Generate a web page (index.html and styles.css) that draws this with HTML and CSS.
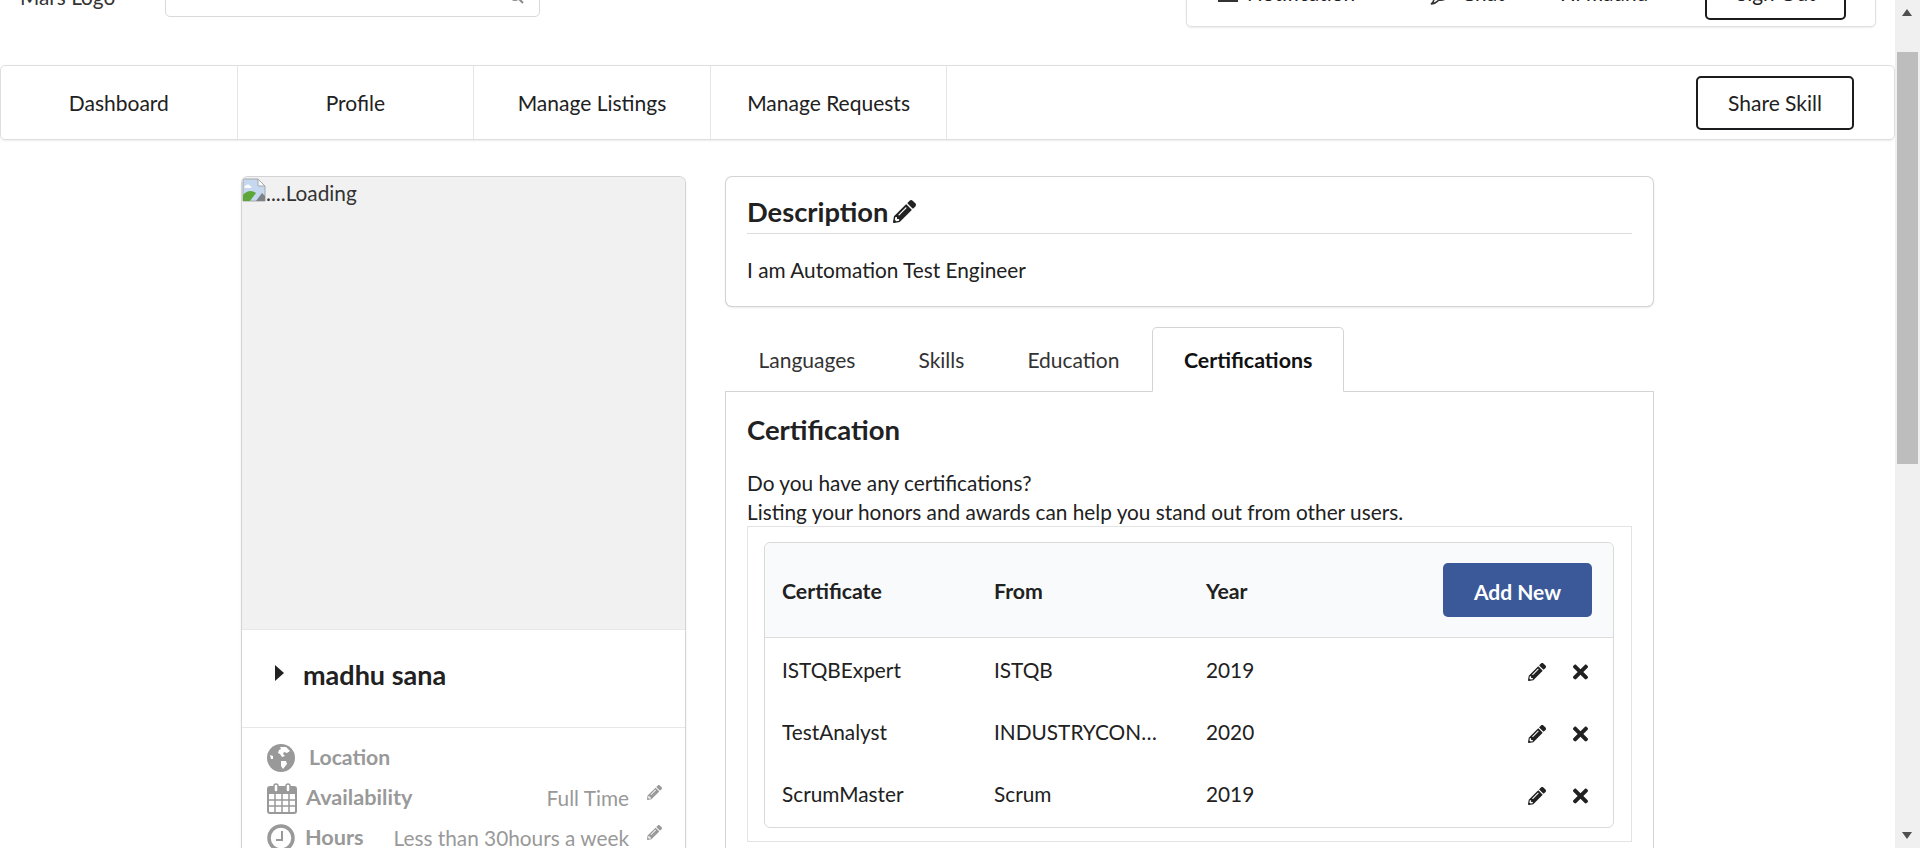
FILE: index.html
```html
<!DOCTYPE html>
<html lang="en">

<head>
	<meta charset="UTF-8" />
	<meta name="viewport" content="width=device-width, initial-scale=1.0" />
	<title>Profile</title>
	<link rel="stylesheet" href="styles.css">
</head>

<body>
	<svg class="defs" width="0" height="0">
		<symbol id="pencil" viewBox="0 0 512 512">
			<path d="M497.9 142.1l-46.1 46.1c-4.7 4.7-12.3 4.7-17 0l-111-111c-4.7-4.7-4.7-12.3 0-17l46.1-46.1c18.7-18.7 49.1-18.7 67.9 0l60.1 60.1c18.8 18.7 18.8 49.1 0 67.9zM284.2 99.8L21.6 362.4.4 483.9c-2.9 16.4 11.4 30.6 27.8 27.8l121.5-21.3 262.6-262.6c4.7-4.7 4.7-12.3 0-17l-111-111c-4.8-4.7-12.4-4.7-17.1 0zM124.1 339.9c-5.5-5.5-5.5-14.3 0-19.8l154-154c5.5-5.5 14.3-5.5 19.8 0s5.5 14.3 0 19.8l-154 154c-5.5 5.5-14.3 5.5-19.8 0zM88 424h48v36.3l-64.5 11.3-31.1-31.1L51.7 376H88v48z" />
		</symbol>
		<symbol id="cross" viewBox="0 0 352 512">
			<path d="M242.72 256l100.07-100.07c12.28-12.28 12.28-32.19 0-44.48l-22.24-22.24c-12.28-12.28-32.19-12.28-44.48 0L176 189.28 75.93 89.21c-12.28-12.28-32.19-12.28-44.48 0L9.21 111.45c-12.28 12.28-12.28 32.19 0 44.48L109.28 256 9.21 356.07c-12.28 12.28-12.28 32.19 0 44.48l22.24 22.24c12.28 12.28 32.2 12.28 44.48 0L176 322.72l100.07 100.07c12.28 12.28 32.2 12.28 44.48 0l22.24-22.24c12.28-12.28 12.28-32.19 0-44.48L242.72 256z" />
		</symbol>
	</svg>

	<div class="page">
		<div class="topbar">
			<div class="logo">Mars Logo</div>
			<div class="search">
				<svg class="search-icon" width="16" height="16" viewBox="0 0 16 16">
					<circle cx="7" cy="7" r="5" fill="none" stroke="#8a8a8a" stroke-width="2" />
					<path d="M11 11l4 4" stroke="#8a8a8a" stroke-width="2" />
				</svg>
			</div>
			<div class="usermenu">
				<svg class="icon-note" width="20" height="18" viewBox="0 0 20 18">
					<path d="M0 3h20M0 9h20M0 15h20" stroke="#333" stroke-width="2" />
				</svg>
				<span class="note-text">Notification</span>
				<svg class="icon-chat" width="20" height="20" viewBox="0 0 20 20">
					<path d="M5 13a9 7 0 1 1 5 2c-2 2-5 4-8 4 2-1 3-3 3-6z" fill="none" stroke="#333" stroke-width="1.6" />
				</svg>
				<span class="chat-text">Chat</span>
				<span class="hello">Hi madhu</span>
				<a class="btn-outline btn-signout" href="#">Sign Out</a>
			</div>
		</div>

		<nav class="mainnav">
			<a class="navitem" href="#">Dashboard</a>
			<a class="navitem" href="#">Profile</a>
			<a class="navitem" href="#">Manage Listings</a>
			<a class="navitem" href="#">Manage Requests</a>
			<a class="btn-outline btn-share" href="#">Share Skill</a>
		</nav>

		<div class="content">
			<aside class="profile">
				<div class="photo">
					<svg class="broken" width="24" height="24" viewBox="0 0 24 24">
						<path d="M1 1h15l7 7v15H1z" fill="#c6d8ef" stroke="#a3a8ad" />
						<path d="M16 1v7h7z" fill="#fafafa" stroke="#a3a8ad" />
						<path d="M3 8c2-2 4-2 5 0 2 0 2 2 0 2H4C2 10 2 8 3 8z" fill="#fff" />
						<path d="M1 23v-6c4-5 9-5 13-2l-6 8z" fill="#5da639" />
						<path d="M14 23l6-8 3 3v5z" fill="#7d8287" />
					</svg>
					<span class="photo-alt">....Loading</span>
				</div>
				<div class="person">
					<span class="caret"></span>
					<span class="person-name">madhu sana</span>
				</div>
				<ul class="facts">
					<li class="fact">
						<svg class="fact-icon" width="28" height="28" viewBox="0 0 28 28">
							<circle cx="14" cy="14" r="14" fill="#999" />
							<path d="M13 3l6 0 4 4-3 2-3-1-1 2 2 2-3 1-2-3-2-1 1-3 2-1z M14 17l5 0 1 3-4 5-2-3z M3 11l3 1 0 3-2 0z" fill="#fff" />
						</svg>
						<span class="fact-label fact-label-wide">Location</span>
					</li>
					<li class="fact">
						<svg class="fact-icon" width="30" height="31" viewBox="0 0 30 31">
							<rect x="1" y="4" width="28" height="26" rx="2" fill="#fff" stroke="#999" stroke-width="2" />
							<rect x="1" y="4" width="28" height="7" fill="#999" />
							<path d="M1 17h28M1 23h28M8 11v19M15 11v19M22 11v19" stroke="#999" stroke-width="1.5" />
							<rect x="7" y="1" width="4" height="8" rx="2" fill="#fff" stroke="#999" stroke-width="1.5" />
							<rect x="19" y="1" width="4" height="8" rx="2" fill="#fff" stroke="#999" stroke-width="1.5" />
						</svg>
						<span class="fact-label">Availability</span>
						<span class="fact-value">Full Time</span>
						<svg class="fact-edit"><use href="#pencil" /></svg>
					</li>
					<li class="fact">
						<svg class="fact-icon fact-clock" width="28" height="28" viewBox="0 0 28 28">
							<circle cx="14" cy="14" r="12" fill="none" stroke="#999" stroke-width="3.5" />
							<path d="M15 7v9H9" fill="none" stroke="#999" stroke-width="2" />
						</svg>
						<span class="fact-label">Hours</span>
						<span class="fact-value">Less than 30hours a week</span>
						<svg class="fact-edit"><use href="#pencil" /></svg>
					</li>
				</ul>
			</aside>

			<main class="details">
				<section class="desc">
					<h3 class="desc-title">Description<svg class="desc-pencil"><use href="#pencil" /></svg></h3>
					<p class="desc-text">I am Automation Test Engineer</p>
				</section>

				<div class="tabs">
					<a class="tab" href="#">Languages</a>
					<a class="tab" href="#">Skills</a>
					<a class="tab" href="#">Education</a>
					<a class="tab tab-active" href="#">Certifications</a>
				</div>

				<section class="panel">
					<h3 class="panel-title">Certification</h3>
					<p class="panel-text">Do you have any certifications?<br />Listing your honors and awards can help you stand out from other users.</p>
					<div class="segment">
						<table class="certs">
							<thead>
								<tr>
									<th>Certificate</th>
									<th>From</th>
									<th>Year</th>
									<th class="cell-right"><a class="btn-add" href="#">Add New</a></th>
								</tr>
							</thead>
							<tbody>
								<tr>
									<td>ISTQBExpert</td>
									<td>ISTQB</td>
									<td>2019</td>
									<td class="cell-right">
										<svg class="act-edit"><use href="#pencil" /></svg>
										<svg class="act-del"><use href="#cross" /></svg>
									</td>
								</tr>
								<tr>
									<td>TestAnalyst</td>
									<td>INDUSTRYCONNECT</td>
									<td>2020</td>
									<td class="cell-right">
										<svg class="act-edit"><use href="#pencil" /></svg>
										<svg class="act-del"><use href="#cross" /></svg>
									</td>
								</tr>
								<tr>
									<td>ScrumMaster</td>
									<td>Scrum</td>
									<td>2019</td>
									<td class="cell-right">
										<svg class="act-edit"><use href="#pencil" /></svg>
										<svg class="act-del"><use href="#cross" /></svg>
									</td>
								</tr>
							</tbody>
						</table>
					</div>
				</section>
			</main>
		</div>
	</div>

	<div class="scrollbar">
		<span class="arrow-up"></span>
		<span class="thumb"></span>
		<span class="arrow-down"></span>
	</div>
</body>

</html>
```

FILE: styles.css
```css
* {
	margin: 0;
	padding: 0;
	list-style: none;
	box-sizing: border-box;
}

body {
	display: flex;
	height: 100vh;
	overflow: hidden;
	background-color: white;
	color: #212121;
	font-family: Lato, "Liberation Sans", sans-serif;
	font-size: 20.8px;
	line-height: 29.4px;
}

a {
	color: inherit;
	text-decoration: none;
}

.defs {
	display: none;
}

.page {
	flex: 1;
	min-width: 0;
	overflow: hidden;
}

/* top bar is scrolled mostly out of view */
.topbar {
	display: flex;
	align-items: flex-end;
	height: 68px;
	margin-top: -41px;
}

.logo {
	width: 165px;
	padding-left: 20px;
	padding-bottom: 16px;
	color: #333;
}

.search {
	display: flex;
	align-items: flex-end;
	justify-content: flex-end;
	width: 375px;
	height: 57px;
	margin-bottom: 10px;
	padding-right: 15px;
	padding-bottom: 12px;
	border: 1px solid #d9d9d9;
	border-radius: 5px;
}

.usermenu {
	display: flex;
	align-items: center;
	width: 690px;
	height: 68px;
	margin-left: auto;
	margin-right: 19px;
	padding-left: 31px;
	border: 1px solid #e0e0e0;
	border-radius: 5px;
	box-shadow: 0 1px 2px rgba(0, 0, 0, 0.08);
}

.icon-note,
.icon-chat {
	margin-top: 4px;
}

.note-text {
	margin-left: 9px;
	margin-right: 74px;
}

.chat-text {
	margin-left: 12px;
	margin-right: 55.5px;
}

.hello {
	margin-right: 57px;
}

.btn-outline {
	display: flex;
	align-items: center;
	justify-content: center;
	height: 54px;
	border: 2px solid #1b1c1d;
	border-radius: 5px;
	color: #212121;
}

.btn-signout {
	width: 141px;
}

.mainnav {
	display: flex;
	align-items: center;
	height: 75px;
	margin-top: 38px;
	border: 1px solid #dedede;
	border-radius: 5px;
	box-shadow: 0 1px 2px rgba(0, 0, 0, 0.08);
	font-size: 21px;
}

.navitem {
	display: flex;
	align-items: center;
	justify-content: center;
	width: 236.6px;
	height: 100%;
	padding-top: 1px;
	border-right: 1px solid #e6e6e6;
}

.btn-share {
	width: 158px;
	margin-left: auto;
	margin-right: 40px;
}

.content {
	display: flex;
	align-items: flex-start;
	gap: 40px;
	margin-top: 37px;
	padding-left: 242px;
}

.profile {
	width: 443px;
	flex: none;
	border-radius: 6px;
	box-shadow: 0 1px 3px 0 #d4d4d5, 0 0 0 1px #d4d4d5;
	overflow: hidden;
}

.photo {
	display: flex;
	align-items: flex-start;
	height: 452px;
	padding-top: 1px;
	background-color: #f1f1f1;
}

.broken {
	flex: none;
}

.photo-alt {
	color: #333;
}

.person {
	display: flex;
	align-items: center;
	height: 99px;
	padding-left: 33px;
	padding-bottom: 8px;
	border-top: 1px solid #e8e8e8;
	border-bottom: 1px solid #e8e8e8;
}

.caret {
	width: 0;
	height: 0;
	margin-right: 19px;
	margin-top: -4px;
	border-top: 8px solid transparent;
	border-bottom: 8px solid transparent;
	border-left: 9px solid #212121;
}

.person-name {
	font-size: 27px;
	font-weight: bold;
}

.facts {
	padding: 10px 23px 0 25px;
	color: #999;
}

.fact {
	display: flex;
	align-items: center;
	height: 40px;
}

.fact-icon {
	flex: none;
}

.fact-clock {
	margin-right: 1px;
}

.fact-label {
	margin-left: 9px;
	font-size: 21.7px;
	font-weight: bold;
}

.fact-label-wide {
	margin-left: 14px;
	font-size: 21.2px;
}

.fact-value {
	margin-left: auto;
}

.fact-edit {
	width: 15px;
	height: 15px;
	margin-left: 18px;
	margin-bottom: 12px;
	fill: #999;
}

.details {
	width: 929px;
	flex: none;
}

.desc {
	height: 129px;
	margin: 0 1px;
	padding: 0 21px;
	border-radius: 6px;
	box-shadow: 0 1px 3px 0 #d4d4d5, 0 0 0 1px #d4d4d5;
}

.desc-title {
	display: flex;
	align-items: center;
	height: 57px;
	padding-top: 13px;
	border-bottom: 1px solid #dcdcdc;
	font-size: 27.3px;
	font-weight: bold;
}

.desc-pencil {
	width: 23px;
	height: 23px;
	margin-left: 5px;
	fill: #212121;
}

.desc-text {
	padding-top: 21px;
}

.tabs {
	display: flex;
	height: 65px;
	margin-top: 21px;
	padding-left: 2px;
	font-size: 21px;
}

.tab {
	display: flex;
	align-items: center;
	padding: 1px 31.5px 0;
	color: #333;
}

.tab-active {
	position: relative;
	height: 65px;
	margin-left: 1px;
	padding: 2px 31px 0;
	border: 1px solid #d4d4d5;
	border-bottom: 1px solid white;
	border-radius: 5px 5px 0 0;
	color: #111;
	font-size: 21.4px;
	font-weight: bold;
}

.panel {
	height: 600px;
	margin-top: -1px;
	padding: 0 21px;
	border: 1px solid #d4d4d5;
}

.panel-title {
	padding-top: 18px;
	font-size: 27.5px;
	line-height: 40px;
	font-weight: bold;
}

.panel-text {
	margin-top: 17.5px;
}

.segment {
	width: 885px;
	padding: 15px 17px 13px 16px;
	border: 1px solid #e3e3e3;
}

.certs {
	width: 850px;
	table-layout: fixed;
	border-collapse: separate;
	border-spacing: 0;
	border: 1px solid #d9d9da;
	border-radius: 6px;
}

.certs th {
	height: 95px;
	padding: 2px 17px 0;
	background-color: #f9fafb;
	border-bottom: 1px solid #dedede;
	text-align: left;
	font-size: 21.3px;
	font-weight: bold;
}

.certs th:first-child {
	border-top-left-radius: 6px;
}

.certs th:last-child {
	border-top-right-radius: 6px;
}

.certs th.cell-right {
	padding-top: 0;
}

/* text sits a little above the middle of each row */
.certs td {
	height: 62px;
	padding: 0 17px 6px;
	white-space: nowrap;
	overflow: hidden;
	text-overflow: ellipsis;
}

.certs tbody tr:first-child td {
	height: 65px;
	padding-top: 3px;
}

.certs .cell-right {
	text-align: right;
}

.btn-add {
	display: inline-flex;
	align-items: center;
	justify-content: center;
	width: 149px;
	height: 54px;
	margin-right: 4px;
	padding-top: 2px;
	border-radius: 5px;
	background-color: #3b5998;
	color: white;
	font-size: 21px;
}

.act-edit {
	width: 18px;
	height: 18px;
	margin-right: 21px;
	vertical-align: middle;
	fill: #212121;
}

.act-del {
	width: 15px;
	height: 22px;
	margin-right: 8.5px;
	vertical-align: middle;
	fill: #212121;
}

.scrollbar {
	position: relative;
	flex: none;
	width: 25px;
	background-color: #f0f0f0;
}

.thumb {
	position: absolute;
	top: 52px;
	left: 2px;
	width: 21px;
	height: 412px;
	background-color: #bdbdbd;
}

.arrow-up,
.arrow-down {
	position: absolute;
	left: 7px;
	width: 0;
	height: 0;
	border-left: 5.5px solid transparent;
	border-right: 5.5px solid transparent;
}

.arrow-up {
	top: 9px;
	border-bottom: 7px solid #505050;
}

.arrow-down {
	top: 832px;
	border-top: 7px solid #505050;
}
```
